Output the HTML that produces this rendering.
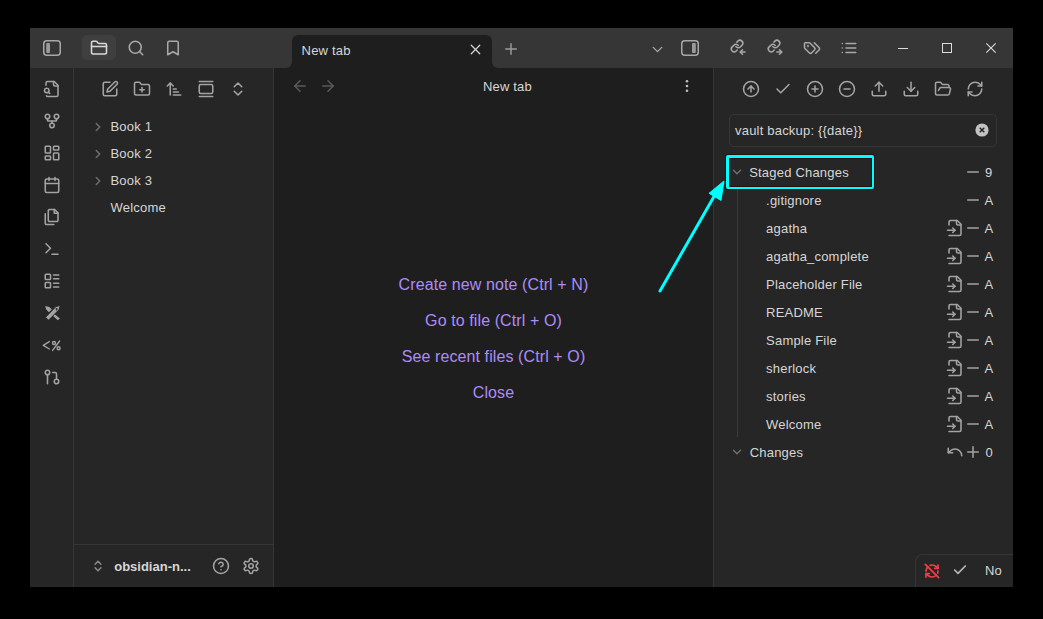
<!DOCTYPE html>
<html><head><meta charset="utf-8"><style>
html,body{margin:0;padding:0;}
body{width:1043px;height:619px;background:#000;position:relative;overflow:hidden;font-family:"Liberation Sans",sans-serif;}
.bg,.t,.ic{position:absolute;box-sizing:content-box;}
.t{white-space:nowrap;letter-spacing:0.2px;}
.ic{overflow:visible;}
</style></head><body>
<div class="bg" style="left:30px;top:28px;width:983px;height:40px;background:#363636"></div>
<div class="bg" style="left:30px;top:68px;width:43px;height:519px;background:#262626"></div>
<div class="bg" style="left:73px;top:68px;width:1px;height:519px;background:#363636"></div>
<div class="bg" style="left:74px;top:68px;width:199px;height:519px;background:#262626"></div>
<div class="bg" style="left:273px;top:68px;width:1px;height:519px;background:#363636"></div>
<div class="bg" style="left:274px;top:68px;width:439px;height:519px;background:#1e1e1e"></div>
<div class="bg" style="left:713px;top:68px;width:1px;height:519px;background:#363636"></div>
<div class="bg" style="left:714px;top:68px;width:299px;height:519px;background:#262626"></div>
<div class="bg" style="left:292px;top:35px;width:200px;height:34px;background:#1e1e1e;border-radius:6px 6px 0 0"></div>
<svg class="ic" style="left:286px;top:62px;width:6px;height:6px" viewBox="0 0 6 6"><path d="M0 6 A6 6 0 0 0 6 0 V6 Z" fill="#1e1e1e"/></svg>
<svg class="ic" style="left:492px;top:62px;width:6px;height:6px" viewBox="0 0 6 6"><path d="M6 6 A6 6 0 0 1 0 0 V6 Z" fill="#1e1e1e"/></svg>
<svg class="ic" style="left:42px;top:39px;width:20px;height:18px" viewBox="0 0 20 18"><rect x="1.75" y="1.75" width="16.5" height="14.5" rx="3" fill="none" stroke="#a8a8a8" stroke-width="1.5"/><rect x="4.2" y="4" width="3.8" height="10" rx="1" fill="#9a9a9a"/></svg>
<div class="bg" style="left:82px;top:35px;width:34px;height:25px;background:#3f3f3f;border-radius:5px"></div>
<svg class="ic" style="left:90.00px;top:38.50px;width:18px;height:18px" viewBox="0 0 24 24" fill="none" stroke="#dadada" stroke-width="2.067" stroke-linecap="round" stroke-linejoin="round"><path d="M20 20a2 2 0 0 0 2-2V8a2 2 0 0 0-2-2h-7.9a2 2 0 0 1-1.69-.9L9.6 3.9A2 2 0 0 0 7.93 3H4a2 2 0 0 0-2 2v13a2 2 0 0 0 2 2Z"/><path d="M2 10h20"/></svg>
<svg class="ic" style="left:126.80px;top:39.20px;width:18px;height:18px" viewBox="0 0 24 24" fill="none" stroke="#a8a8a8" stroke-width="2.067" stroke-linecap="round" stroke-linejoin="round"><circle cx="11" cy="11" r="8"/><path d="m21 21-4.3-4.3"/></svg>
<svg class="ic" style="left:163.90px;top:39.00px;width:18px;height:18px" viewBox="0 0 24 24" fill="none" stroke="#a8a8a8" stroke-width="2.067" stroke-linecap="round" stroke-linejoin="round"><path d="m19 21-7-4-7 4V5a2 2 0 0 1 2-2h10a2 2 0 0 1 2 2v16z"/></svg>
<div class="t" style="left:301.60px;top:44.00px;font-size:13px;line-height:13px;color:#d6d6d6;font-weight:normal;">New tab</div>
<svg class="ic" style="left:467.10px;top:41.10px;width:17px;height:17px" viewBox="0 0 24 24" fill="none" stroke="#d4d4d4" stroke-width="1.835" stroke-linecap="round" stroke-linejoin="round"><path d="M18 6 6 18"/><path d="m6 6 12 12"/></svg>
<svg class="ic" style="left:502.00px;top:40.10px;width:18px;height:18px" viewBox="0 0 24 24" fill="none" stroke="#9a9a9a" stroke-width="2.000" stroke-linecap="round" stroke-linejoin="round"><path d="M5 12h14"/><path d="M12 5v14"/></svg>
<svg class="ic" style="left:649.30px;top:40.70px;width:17px;height:17px" viewBox="0 0 24 24" fill="none" stroke="#a8a8a8" stroke-width="1.976" stroke-linecap="round" stroke-linejoin="round"><path d="m6 9 6 6 6-6"/></svg>
<svg class="ic" style="left:680px;top:39px;width:20px;height:18px" viewBox="0 0 20 18"><rect x="1.75" y="1.75" width="16.5" height="14.5" rx="3" fill="none" stroke="#a8a8a8" stroke-width="1.5"/><rect x="12" y="4" width="3.8" height="10" rx="1" fill="#9a9a9a"/></svg>
<svg class="ic" style="left:728.50px;top:38.20px;width:18px;height:18px" viewBox="0 0 24 24" fill="none" stroke="#a8a8a8" stroke-width="2.067" stroke-linecap="round" stroke-linejoin="round"><g transform="translate(10.75 10.75) scale(0.77) translate(-12 -12)" stroke-width="2.68"><path d="M10 13a5 5 0 0 0 7.54.54l3-3a5 5 0 0 0-7.07-7.07l-1.72 1.71"/><path d="M14 11a5 5 0 0 0-7.54-.54l-3 3a5 5 0 0 0 7.07 7.07l1.71-1.71"/></g><path d="M15.2 18.6h6.2"/><path d="M18 15.6l-3 3 3 3"/></svg>
<svg class="ic" style="left:766.00px;top:38.20px;width:18px;height:18px" viewBox="0 0 24 24" fill="none" stroke="#a8a8a8" stroke-width="2.067" stroke-linecap="round" stroke-linejoin="round"><g transform="translate(10.75 10.75) scale(0.77) translate(-12 -12)" stroke-width="2.68"><path d="M10 13a5 5 0 0 0 7.54.54l3-3a5 5 0 0 0-7.07-7.07l-1.72 1.71"/><path d="M14 11a5 5 0 0 0-7.54-.54l-3 3a5 5 0 0 0 7.07 7.07l1.71-1.71"/></g><path d="M14.5 18.6h6.2"/><path d="M18 15.6l3 3-3 3"/></svg>
<svg class="ic" style="left:802.80px;top:39.00px;width:18px;height:18px" viewBox="0 0 24 24" fill="none" stroke="#a8a8a8" stroke-width="2.067" stroke-linecap="round" stroke-linejoin="round"><path d="m15 5 6.3 6.3a2.4 2.4 0 0 1 0 3.4L17 19"/><path d="M9.586 5.586A2 2 0 0 0 8.172 5H3a1 1 0 0 0-1 1v5.172a2 2 0 0 0 .586 1.414L8.29 18.29a2.426 2.426 0 0 0 3.42 0l3.58-3.58a2.426 2.426 0 0 0 0-3.42z"/><circle cx="6.5" cy="9.5" r=".5" fill="currentColor"/></svg>
<svg class="ic" style="left:839.80px;top:38.75px;width:18px;height:18px" viewBox="0 0 24 24" fill="none" stroke="#a8a8a8" stroke-width="2.067" stroke-linecap="round" stroke-linejoin="round"><path d="M3 12h.01"/><path d="M3 18h.01"/><path d="M3 6h.01"/><path d="M8 12h13"/><path d="M8 18h13"/><path d="M8 6h13"/></svg>
<div class="bg" style="left:898px;top:48px;width:10px;height:1px;background:#dcdcdc"></div>
<div class="bg" style="left:942px;top:43px;width:8px;height:8px;border:1px solid #dcdcdc"></div>
<svg class="ic" style="left:986px;top:43px;width:10px;height:10px" viewBox="0 0 10 10"><path d="M0.3 0.3L9.7 9.7M9.7 0.3L0.3 9.7" stroke="#dcdcdc" stroke-width="1.1"/></svg>
<svg class="ic" style="left:43.00px;top:80.00px;width:18px;height:18px" viewBox="0 0 24 24" fill="none" stroke="#a3a3a3" stroke-width="2.067" stroke-linecap="round" stroke-linejoin="round"><path d="M4.6 21a1.6 1.6 0 0 0 1.6 1H18a2 2 0 0 0 2-2V7l-5-5H6a2 2 0 0 0-2 2v3"/><path d="M14 2v4a2 2 0 0 0 2 2h4"/><path d="M5 17a3 3 0 1 0 0-6 3 3 0 0 0 0 6z"/><path d="m9 18-1.5-1.5"/></svg>
<svg class="ic" style="left:43.00px;top:112.00px;width:18px;height:18px" viewBox="0 0 24 24" fill="none" stroke="#a3a3a3" stroke-width="2.067" stroke-linecap="round" stroke-linejoin="round"><circle cx="12" cy="18" r="3"/><circle cx="6" cy="6" r="3"/><circle cx="18" cy="6" r="3"/><path d="M18 9v2c0 .6-.4 1-1 1H7c-.6 0-1-.4-1-1V9"/><path d="M12 12v3"/></svg>
<svg class="ic" style="left:43.00px;top:144.00px;width:18px;height:18px" viewBox="0 0 24 24" fill="none" stroke="#a3a3a3" stroke-width="2.067" stroke-linecap="round" stroke-linejoin="round"><rect width="7" height="9" x="3" y="3" rx="1"/><rect width="7" height="5" x="14" y="3" rx="1"/><rect width="7" height="9" x="14" y="12" rx="1"/><rect width="7" height="5" x="3" y="16" rx="1"/></svg>
<svg class="ic" style="left:43.00px;top:176.00px;width:18px;height:18px" viewBox="0 0 24 24" fill="none" stroke="#a3a3a3" stroke-width="2.067" stroke-linecap="round" stroke-linejoin="round"><path d="M8 2v4"/><path d="M16 2v4"/><rect width="18" height="18" x="3" y="4" rx="2"/><path d="M3 10h18"/></svg>
<svg class="ic" style="left:43.00px;top:208.00px;width:18px;height:18px" viewBox="0 0 24 24" fill="none" stroke="#a3a3a3" stroke-width="2.067" stroke-linecap="round" stroke-linejoin="round"><path d="M15.5 2H8.6c-.4 0-.8.2-1.1.5-.3.3-.5.7-.5 1.1v12.8c0 .4.2.8.5 1.1.3.3.7.5 1.1.5h9.8c.4 0 .8-.2 1.1-.5.3-.3.5-.7.5-1.1V6.5L15.5 2z"/><path d="M3 7.6v12.8c0 .4.2.8.5 1.1.3.3.7.5 1.1.5h9.8"/><path d="M15 2v5h5"/></svg>
<svg class="ic" style="left:43.00px;top:240.00px;width:18px;height:18px" viewBox="0 0 24 24" fill="none" stroke="#a3a3a3" stroke-width="2.067" stroke-linecap="round" stroke-linejoin="round"><polyline points="4 17 10 11 4 5"/><line x1="12" x2="20" y1="19" y2="19"/></svg>
<svg class="ic" style="left:43.00px;top:272.00px;width:18px;height:18px" viewBox="0 0 24 24" fill="none" stroke="#a3a3a3" stroke-width="2.067" stroke-linecap="round" stroke-linejoin="round"><rect width="7" height="7" x="3" y="3" rx="1"/><rect width="7" height="7" x="3" y="14" rx="1"/><path d="M14 4h7"/><path d="M14 9h7"/><path d="M14 15h7"/><path d="M14 20h7"/></svg>
<svg class="ic" style="left:43.00px;top:368.00px;width:18px;height:18px" viewBox="0 0 24 24" fill="none" stroke="#a3a3a3" stroke-width="2.067" stroke-linecap="round" stroke-linejoin="round"><circle cx="18" cy="18" r="3"/><circle cx="6" cy="6" r="3"/><path d="M6 9v12"/><path d="M13 6h3a2 2 0 0 1 2 2v7"/></svg>
<svg class="ic" style="left:40px;top:300px;width:24px;height:24px" viewBox="0 0 24 24"><g fill="#a3a3a3"><path d="M5.2 5.9 L9.4 6.9 L11.8 9.6 L8.8 12.3 L6.2 9.6 Z"/><path d="M14.4 13.9 L19.9 18.4 L17.8 20.2 L12.6 15.6 Z"/><path fill-rule="evenodd" stroke="#262626" stroke-width="1" d="M5.4 17.4 L15.9 6.6 L20.3 5.3 L19.1 9.6 L8.6 20.2 Z M16.6 8.6 a0.6 0.6 0 1 0 0.01 0 Z"/></g></svg>
<svg class="ic" style="left:0;top:0;width:1043px;height:619px" viewBox="0 0 1043 619"><g fill="none" stroke="#a3a3a3" stroke-width="1.4" stroke-linecap="round" stroke-linejoin="round"><path d="M49.3 341.6 L43.3 345.3 L49.3 349"/><path d="M59.6 341 L52.6 350.4"/><circle cx="54" cy="343" r="1.5"/><circle cx="58.6" cy="348.3" r="1.5"/></g></svg>
<svg class="ic" style="left:101.00px;top:79.50px;width:18px;height:18px" viewBox="0 0 24 24" fill="none" stroke="#a3a3a3" stroke-width="2.067" stroke-linecap="round" stroke-linejoin="round"><path d="M12 3H5a2 2 0 0 0-2 2v14a2 2 0 0 0 2 2h14a2 2 0 0 0 2-2v-7"/><path d="M18.375 2.625a2.121 2.121 0 1 1 3 3L12 15l-4 1 1-4Z"/></svg>
<svg class="ic" style="left:133.00px;top:79.50px;width:18px;height:18px" viewBox="0 0 24 24" fill="none" stroke="#a3a3a3" stroke-width="2.067" stroke-linecap="round" stroke-linejoin="round"><path d="M12 10v6"/><path d="M9 13h6"/><path d="M20 20a2 2 0 0 0 2-2V8a2 2 0 0 0-2-2h-7.9a2 2 0 0 1-1.69-.9L9.6 3.9A2 2 0 0 0 7.93 3H4a2 2 0 0 0-2 2v13a2 2 0 0 0 2 2Z"/></svg>
<svg class="ic" style="left:165.00px;top:79.50px;width:18px;height:18px" viewBox="0 0 24 24" fill="none" stroke="#a3a3a3" stroke-width="2.067" stroke-linecap="round" stroke-linejoin="round"><path d="m3 8 4-4 4 4"/><path d="M7 4v16"/><path d="M11 12h4"/><path d="M11 16h7"/><path d="M11 20h10"/></svg>
<svg class="ic" style="left:197.00px;top:79.50px;width:18px;height:18px" viewBox="0 0 24 24" fill="none" stroke="#a3a3a3" stroke-width="2.067" stroke-linecap="round" stroke-linejoin="round"><path d="M3 2h18"/><rect width="18" height="12" x="3" y="6" rx="2"/><path d="M3 22h18"/></svg>
<svg class="ic" style="left:229.00px;top:79.50px;width:18px;height:18px" viewBox="0 0 24 24" fill="none" stroke="#a3a3a3" stroke-width="2.067" stroke-linecap="round" stroke-linejoin="round"><path d="m7 15 5 5 5-5"/><path d="m7 9 5-5 5 5"/></svg>
<svg class="ic" style="left:91.00px;top:119.50px;width:14px;height:14px" viewBox="0 0 24 24" fill="none" stroke="#6e6e6e" stroke-width="2.571" stroke-linecap="round" stroke-linejoin="round"><path d="m9 18 6-6-6-6"/></svg>
<div class="t" style="left:110.50px;top:120.00px;font-size:13px;line-height:13px;color:#d6d6d6;font-weight:normal;">Book 1</div>
<svg class="ic" style="left:91.00px;top:146.50px;width:14px;height:14px" viewBox="0 0 24 24" fill="none" stroke="#6e6e6e" stroke-width="2.571" stroke-linecap="round" stroke-linejoin="round"><path d="m9 18 6-6-6-6"/></svg>
<div class="t" style="left:110.50px;top:147.00px;font-size:13px;line-height:13px;color:#d6d6d6;font-weight:normal;">Book 2</div>
<svg class="ic" style="left:91.00px;top:173.50px;width:14px;height:14px" viewBox="0 0 24 24" fill="none" stroke="#6e6e6e" stroke-width="2.571" stroke-linecap="round" stroke-linejoin="round"><path d="m9 18 6-6-6-6"/></svg>
<div class="t" style="left:110.50px;top:174.00px;font-size:13px;line-height:13px;color:#d6d6d6;font-weight:normal;">Book 3</div>
<div class="t" style="left:110.50px;top:201.00px;font-size:13px;line-height:13px;color:#d6d6d6;font-weight:normal;">Welcome</div>
<div class="bg" style="left:74px;top:544px;width:199px;height:1px;background:#363636"></div>
<svg class="ic" style="left:91.00px;top:559.00px;width:14px;height:14px" viewBox="0 0 24 24" fill="none" stroke="#8a8a8a" stroke-width="2.571" stroke-linecap="round" stroke-linejoin="round"><path d="m7 15 5 5 5-5"/><path d="m7 9 5-5 5 5"/></svg>
<div class="t" style="left:114.20px;top:559.50px;font-size:13px;line-height:13px;color:#d6d6d6;font-weight:bold;letter-spacing:0">obsidian-n...</div>
<svg class="ic" style="left:211.80px;top:557.00px;width:18px;height:18px" viewBox="0 0 24 24" fill="none" stroke="#a3a3a3" stroke-width="2.067" stroke-linecap="round" stroke-linejoin="round"><circle cx="12" cy="12" r="10"/><path d="M9.09 9a3 3 0 0 1 5.83 1c0 2-3 3-3 3"/><path d="M12 17h.01"/></svg>
<svg class="ic" style="left:242.00px;top:557.00px;width:18px;height:18px" viewBox="0 0 24 24" fill="none" stroke="#a3a3a3" stroke-width="2.067" stroke-linecap="round" stroke-linejoin="round"><path d="M12.22 2h-.44a2 2 0 0 0-2 2v.18a2 2 0 0 1-1 1.73l-.43.25a2 2 0 0 1-2 0l-.15-.08a2 2 0 0 0-2.73.73l-.22.38a2 2 0 0 0 .73 2.73l.15.1a2 2 0 0 1 1 1.72v.51a2 2 0 0 1-1 1.74l-.15.09a2 2 0 0 0-.73 2.73l.22.38a2 2 0 0 0 2.73.73l.15-.08a2 2 0 0 1 2 0l.43.25a2 2 0 0 1 1 1.73V20a2 2 0 0 0 2 2h.44a2 2 0 0 0 2-2v-.18a2 2 0 0 1 1-1.73l.43-.25a2 2 0 0 1 2 0l.15.08a2 2 0 0 0 2.73-.73l.22-.39a2 2 0 0 0-.73-2.73l-.15-.08a2 2 0 0 1-1-1.74v-.5a2 2 0 0 1 1-1.74l.15-.09a2 2 0 0 0 .73-2.73l-.22-.38a2 2 0 0 0-2.73-.73l-.15.08a2 2 0 0 1-2 0l-.43-.25a2 2 0 0 1-1-1.73V4a2 2 0 0 0-2-2z"/><circle cx="12" cy="12" r="3"/></svg>
<svg class="ic" style="left:291.00px;top:77.00px;width:18px;height:18px" viewBox="0 0 24 24" fill="none" stroke="#5a5a5a" stroke-width="2.067" stroke-linecap="round" stroke-linejoin="round"><path d="m12 19-7-7 7-7"/><path d="M19 12H5"/></svg>
<svg class="ic" style="left:319.00px;top:77.00px;width:18px;height:18px" viewBox="0 0 24 24" fill="none" stroke="#5a5a5a" stroke-width="2.067" stroke-linecap="round" stroke-linejoin="round"><path d="M5 12h14"/><path d="m12 5 7 7-7 7"/></svg>
<div class="t" style="left:482.90px;top:79.80px;font-size:13px;line-height:13px;color:#d6d6d6;font-weight:normal;">New tab</div>
<svg class="ic" style="left:676px;top:76px;width:20px;height:20px" viewBox="676 76 20 20"><g fill="#bdbdbd"><circle cx="687" cy="81.2" r="1.3"/><circle cx="687" cy="86" r="1.3"/><circle cx="687" cy="90.8" r="1.3"/></g></svg>
<div class="t" style="left:274px;width:439px;text-align:center;top:274.80px;font-size:16px;line-height:20px;color:#ad8cf9;letter-spacing:0.1px">Create new note (Ctrl + N)</div>
<div class="t" style="left:274px;width:439px;text-align:center;top:310.80px;font-size:16px;line-height:20px;color:#ad8cf9;letter-spacing:0.1px">Go to file (Ctrl + O)</div>
<div class="t" style="left:274px;width:439px;text-align:center;top:346.80px;font-size:16px;line-height:20px;color:#ad8cf9;letter-spacing:0.1px">See recent files (Ctrl + O)</div>
<div class="t" style="left:274px;width:439px;text-align:center;top:382.80px;font-size:16px;line-height:20px;color:#ad8cf9;letter-spacing:0.1px">Close</div>
<svg class="ic" style="left:742.00px;top:80.00px;width:18px;height:18px" viewBox="0 0 24 24" fill="none" stroke="#a3a3a3" stroke-width="2.067" stroke-linecap="round" stroke-linejoin="round"><circle cx="12" cy="12" r="10"/><path d="m16 12-4-4-4 4"/><path d="M12 16V8"/></svg>
<svg class="ic" style="left:774.00px;top:80.00px;width:18px;height:18px" viewBox="0 0 24 24" fill="none" stroke="#a3a3a3" stroke-width="2.067" stroke-linecap="round" stroke-linejoin="round"><path d="M20 6 9 17l-5-5"/></svg>
<svg class="ic" style="left:806.00px;top:80.00px;width:18px;height:18px" viewBox="0 0 24 24" fill="none" stroke="#a3a3a3" stroke-width="2.067" stroke-linecap="round" stroke-linejoin="round"><circle cx="12" cy="12" r="10"/><path d="M8 12h8"/><path d="M12 8v8"/></svg>
<svg class="ic" style="left:838.00px;top:80.00px;width:18px;height:18px" viewBox="0 0 24 24" fill="none" stroke="#a3a3a3" stroke-width="2.067" stroke-linecap="round" stroke-linejoin="round"><circle cx="12" cy="12" r="10"/><path d="M8 12h8"/></svg>
<svg class="ic" style="left:870.00px;top:80.00px;width:18px;height:18px" viewBox="0 0 24 24" fill="none" stroke="#a3a3a3" stroke-width="2.067" stroke-linecap="round" stroke-linejoin="round"><path d="M21 15v4a2 2 0 0 1-2 2H5a2 2 0 0 1-2-2v-4"/><polyline points="17 8 12 3 7 8"/><line x1="12" x2="12" y1="3" y2="15"/></svg>
<svg class="ic" style="left:902.00px;top:80.00px;width:18px;height:18px" viewBox="0 0 24 24" fill="none" stroke="#a3a3a3" stroke-width="2.067" stroke-linecap="round" stroke-linejoin="round"><path d="M21 15v4a2 2 0 0 1-2 2H5a2 2 0 0 1-2-2v-4"/><polyline points="7 10 12 15 17 10"/><line x1="12" x2="12" y1="15" y2="3"/></svg>
<svg class="ic" style="left:934.00px;top:80.00px;width:18px;height:18px" viewBox="0 0 24 24" fill="none" stroke="#a3a3a3" stroke-width="2.067" stroke-linecap="round" stroke-linejoin="round"><path d="m6 14 1.5-2.9A2 2 0 0 1 9.24 10H20a2 2 0 0 1 1.94 2.5l-1.54 6a2 2 0 0 1-1.95 1.5H4a2 2 0 0 1-2-2V5a2 2 0 0 1 2-2h3.9a2 2 0 0 1 1.69.9l.81 1.2a2 2 0 0 0 1.67.9H18a2 2 0 0 1 2 2v2"/></svg>
<svg class="ic" style="left:966.00px;top:80.00px;width:18px;height:18px" viewBox="0 0 24 24" fill="none" stroke="#a3a3a3" stroke-width="2.067" stroke-linecap="round" stroke-linejoin="round"><path d="M3 12a9 9 0 0 1 9-9 9.75 9.75 0 0 1 6.74 2.74L21 8"/><path d="M21 3v5h-5"/><path d="M21 12a9 9 0 0 1-9 9 9.75 9.75 0 0 1-6.74-2.74L3 16"/><path d="M8 16H3v5"/></svg>
<div class="bg" style="left:729px;top:114px;width:266px;height:31px;border:1px solid #363636;border-radius:5px;background:#262626"></div>
<div class="t" style="left:735.00px;top:123.80px;font-size:13px;line-height:13px;color:#d6d6d6;font-weight:normal;">vault backup: {{date}}</div>
<svg class="ic" style="left:974.5px;top:123.4px;width:14px;height:14px" viewBox="0 0 14 14"><circle cx="7" cy="7" r="6.6" fill="#c2c2c2"/><path d="M4.7 4.7L9.3 9.3M9.3 4.7L4.7 9.3" stroke="#1e1e1e" stroke-width="1.3" stroke-linecap="butt"/></svg>
<svg class="ic" style="left:730.00px;top:165.00px;width:14px;height:14px" viewBox="0 0 24 24" fill="none" stroke="#6e6e6e" stroke-width="2.571" stroke-linecap="round" stroke-linejoin="round"><path d="m6 9 6 6 6-6"/></svg>
<div class="t" style="left:749.20px;top:165.90px;font-size:13px;line-height:13px;color:#d6d6d6;font-weight:normal;">Staged Changes</div>
<svg class="ic" style="left:964.00px;top:163.00px;width:18px;height:18px" viewBox="0 0 24 24" fill="none" stroke="#a3a3a3" stroke-width="2.067" stroke-linecap="round" stroke-linejoin="round"><path d="M5 12h14"/></svg>
<div class="t" style="left:984.90px;top:166.10px;font-size:13px;line-height:13px;color:#d6d6d6;font-weight:normal;">9</div>
<div class="bg" style="left:737px;top:189px;width:1px;height:248px;background:#3a3a3a"></div>
<div class="t" style="left:766.10px;top:193.80px;font-size:13px;line-height:13px;color:#d6d6d6;font-weight:normal;">.gitignore</div>
<svg class="ic" style="left:964.00px;top:191.00px;width:18px;height:18px" viewBox="0 0 24 24" fill="none" stroke="#a3a3a3" stroke-width="2.067" stroke-linecap="round" stroke-linejoin="round"><path d="M5 12h14"/></svg>
<div class="t" style="left:984.40px;top:193.80px;font-size:13px;line-height:13px;color:#d6d6d6;font-weight:normal;">A</div>
<div class="t" style="left:766.10px;top:221.80px;font-size:13px;line-height:13px;color:#d6d6d6;font-weight:normal;">agatha</div>
<svg class="ic" style="left:946.40px;top:219.10px;width:18px;height:18px" viewBox="0 0 24 24" fill="none" stroke="#a3a3a3" stroke-width="2.067" stroke-linecap="round" stroke-linejoin="round"><path d="M4 22h14a2 2 0 0 0 2-2V7l-5-5H6a2 2 0 0 0-2 2v4"/><path d="M14 2v4a2 2 0 0 0 2 2h4"/><path d="M2 15h10"/><path d="m9 18 3-3-3-3"/></svg>
<svg class="ic" style="left:964.00px;top:219.00px;width:18px;height:18px" viewBox="0 0 24 24" fill="none" stroke="#a3a3a3" stroke-width="2.067" stroke-linecap="round" stroke-linejoin="round"><path d="M5 12h14"/></svg>
<div class="t" style="left:984.40px;top:221.80px;font-size:13px;line-height:13px;color:#d6d6d6;font-weight:normal;">A</div>
<div class="t" style="left:766.10px;top:249.80px;font-size:13px;line-height:13px;color:#d6d6d6;font-weight:normal;">agatha_complete</div>
<svg class="ic" style="left:946.40px;top:247.10px;width:18px;height:18px" viewBox="0 0 24 24" fill="none" stroke="#a3a3a3" stroke-width="2.067" stroke-linecap="round" stroke-linejoin="round"><path d="M4 22h14a2 2 0 0 0 2-2V7l-5-5H6a2 2 0 0 0-2 2v4"/><path d="M14 2v4a2 2 0 0 0 2 2h4"/><path d="M2 15h10"/><path d="m9 18 3-3-3-3"/></svg>
<svg class="ic" style="left:964.00px;top:247.00px;width:18px;height:18px" viewBox="0 0 24 24" fill="none" stroke="#a3a3a3" stroke-width="2.067" stroke-linecap="round" stroke-linejoin="round"><path d="M5 12h14"/></svg>
<div class="t" style="left:984.40px;top:249.80px;font-size:13px;line-height:13px;color:#d6d6d6;font-weight:normal;">A</div>
<div class="t" style="left:766.10px;top:277.80px;font-size:13px;line-height:13px;color:#d6d6d6;font-weight:normal;">Placeholder File</div>
<svg class="ic" style="left:946.40px;top:275.10px;width:18px;height:18px" viewBox="0 0 24 24" fill="none" stroke="#a3a3a3" stroke-width="2.067" stroke-linecap="round" stroke-linejoin="round"><path d="M4 22h14a2 2 0 0 0 2-2V7l-5-5H6a2 2 0 0 0-2 2v4"/><path d="M14 2v4a2 2 0 0 0 2 2h4"/><path d="M2 15h10"/><path d="m9 18 3-3-3-3"/></svg>
<svg class="ic" style="left:964.00px;top:275.00px;width:18px;height:18px" viewBox="0 0 24 24" fill="none" stroke="#a3a3a3" stroke-width="2.067" stroke-linecap="round" stroke-linejoin="round"><path d="M5 12h14"/></svg>
<div class="t" style="left:984.40px;top:277.80px;font-size:13px;line-height:13px;color:#d6d6d6;font-weight:normal;">A</div>
<div class="t" style="left:766.10px;top:305.80px;font-size:13px;line-height:13px;color:#d6d6d6;font-weight:normal;">README</div>
<svg class="ic" style="left:946.40px;top:303.10px;width:18px;height:18px" viewBox="0 0 24 24" fill="none" stroke="#a3a3a3" stroke-width="2.067" stroke-linecap="round" stroke-linejoin="round"><path d="M4 22h14a2 2 0 0 0 2-2V7l-5-5H6a2 2 0 0 0-2 2v4"/><path d="M14 2v4a2 2 0 0 0 2 2h4"/><path d="M2 15h10"/><path d="m9 18 3-3-3-3"/></svg>
<svg class="ic" style="left:964.00px;top:303.00px;width:18px;height:18px" viewBox="0 0 24 24" fill="none" stroke="#a3a3a3" stroke-width="2.067" stroke-linecap="round" stroke-linejoin="round"><path d="M5 12h14"/></svg>
<div class="t" style="left:984.40px;top:305.80px;font-size:13px;line-height:13px;color:#d6d6d6;font-weight:normal;">A</div>
<div class="t" style="left:766.10px;top:333.80px;font-size:13px;line-height:13px;color:#d6d6d6;font-weight:normal;">Sample File</div>
<svg class="ic" style="left:946.40px;top:331.10px;width:18px;height:18px" viewBox="0 0 24 24" fill="none" stroke="#a3a3a3" stroke-width="2.067" stroke-linecap="round" stroke-linejoin="round"><path d="M4 22h14a2 2 0 0 0 2-2V7l-5-5H6a2 2 0 0 0-2 2v4"/><path d="M14 2v4a2 2 0 0 0 2 2h4"/><path d="M2 15h10"/><path d="m9 18 3-3-3-3"/></svg>
<svg class="ic" style="left:964.00px;top:331.00px;width:18px;height:18px" viewBox="0 0 24 24" fill="none" stroke="#a3a3a3" stroke-width="2.067" stroke-linecap="round" stroke-linejoin="round"><path d="M5 12h14"/></svg>
<div class="t" style="left:984.40px;top:333.80px;font-size:13px;line-height:13px;color:#d6d6d6;font-weight:normal;">A</div>
<div class="t" style="left:766.10px;top:361.80px;font-size:13px;line-height:13px;color:#d6d6d6;font-weight:normal;">sherlock</div>
<svg class="ic" style="left:946.40px;top:359.10px;width:18px;height:18px" viewBox="0 0 24 24" fill="none" stroke="#a3a3a3" stroke-width="2.067" stroke-linecap="round" stroke-linejoin="round"><path d="M4 22h14a2 2 0 0 0 2-2V7l-5-5H6a2 2 0 0 0-2 2v4"/><path d="M14 2v4a2 2 0 0 0 2 2h4"/><path d="M2 15h10"/><path d="m9 18 3-3-3-3"/></svg>
<svg class="ic" style="left:964.00px;top:359.00px;width:18px;height:18px" viewBox="0 0 24 24" fill="none" stroke="#a3a3a3" stroke-width="2.067" stroke-linecap="round" stroke-linejoin="round"><path d="M5 12h14"/></svg>
<div class="t" style="left:984.40px;top:361.80px;font-size:13px;line-height:13px;color:#d6d6d6;font-weight:normal;">A</div>
<div class="t" style="left:766.10px;top:389.80px;font-size:13px;line-height:13px;color:#d6d6d6;font-weight:normal;">stories</div>
<svg class="ic" style="left:946.40px;top:387.10px;width:18px;height:18px" viewBox="0 0 24 24" fill="none" stroke="#a3a3a3" stroke-width="2.067" stroke-linecap="round" stroke-linejoin="round"><path d="M4 22h14a2 2 0 0 0 2-2V7l-5-5H6a2 2 0 0 0-2 2v4"/><path d="M14 2v4a2 2 0 0 0 2 2h4"/><path d="M2 15h10"/><path d="m9 18 3-3-3-3"/></svg>
<svg class="ic" style="left:964.00px;top:387.00px;width:18px;height:18px" viewBox="0 0 24 24" fill="none" stroke="#a3a3a3" stroke-width="2.067" stroke-linecap="round" stroke-linejoin="round"><path d="M5 12h14"/></svg>
<div class="t" style="left:984.40px;top:389.80px;font-size:13px;line-height:13px;color:#d6d6d6;font-weight:normal;">A</div>
<div class="t" style="left:766.10px;top:417.80px;font-size:13px;line-height:13px;color:#d6d6d6;font-weight:normal;">Welcome</div>
<svg class="ic" style="left:946.40px;top:415.10px;width:18px;height:18px" viewBox="0 0 24 24" fill="none" stroke="#a3a3a3" stroke-width="2.067" stroke-linecap="round" stroke-linejoin="round"><path d="M4 22h14a2 2 0 0 0 2-2V7l-5-5H6a2 2 0 0 0-2 2v4"/><path d="M14 2v4a2 2 0 0 0 2 2h4"/><path d="M2 15h10"/><path d="m9 18 3-3-3-3"/></svg>
<svg class="ic" style="left:964.00px;top:415.00px;width:18px;height:18px" viewBox="0 0 24 24" fill="none" stroke="#a3a3a3" stroke-width="2.067" stroke-linecap="round" stroke-linejoin="round"><path d="M5 12h14"/></svg>
<div class="t" style="left:984.40px;top:417.80px;font-size:13px;line-height:13px;color:#d6d6d6;font-weight:normal;">A</div>
<svg class="ic" style="left:730.00px;top:445.00px;width:14px;height:14px" viewBox="0 0 24 24" fill="none" stroke="#6e6e6e" stroke-width="2.571" stroke-linecap="round" stroke-linejoin="round"><path d="m6 9 6 6 6-6"/></svg>
<div class="t" style="left:749.70px;top:445.80px;font-size:13px;line-height:13px;color:#d6d6d6;font-weight:normal;">Changes</div>
<svg class="ic" style="left:945.80px;top:443.00px;width:18px;height:18px" viewBox="0 0 24 24" fill="none" stroke="#a3a3a3" stroke-width="2.067" stroke-linecap="round" stroke-linejoin="round"><path d="M3 7v6h6"/><path d="M21 17a9 9 0 0 0-9-9 9 9 0 0 0-6 2.3L3 13"/></svg>
<svg class="ic" style="left:964.00px;top:443.00px;width:18px;height:18px" viewBox="0 0 24 24" fill="none" stroke="#a3a3a3" stroke-width="2.067" stroke-linecap="round" stroke-linejoin="round"><path d="M5 12h14"/><path d="M12 5v14"/></svg>
<div class="t" style="left:985.40px;top:445.80px;font-size:13px;line-height:13px;color:#d6d6d6;font-weight:normal;">0</div>
<div class="bg" style="left:726px;top:155px;width:143px;height:29px;border:solid #00ffff;border-width:3px 2px 2px 3px;border-radius:2px;box-shadow:0 0 0 1px rgba(30,8,8,0.6), inset 0 0 0 1px rgba(30,8,8,0.6)"></div>
<svg class="ic" style="left:0;top:0;width:1043px;height:619px" viewBox="0 0 1043 619"><line x1="660" y1="291" x2="716" y2="193" stroke="#00ffff" stroke-width="3" stroke-linecap="round"/><path d="M724 181 L709 193.3 L721 200.4 Z" fill="#00ffff" stroke="#00ffff" stroke-width="1" stroke-linejoin="round"/></svg>
<div class="bg" style="left:915px;top:554px;width:97px;height:32px;border-top:1px solid #363636;border-left:1px solid #363636;border-radius:8px 0 0 0;background:#262626"></div>
<svg class="ic" style="left:924.00px;top:563.00px;width:16px;height:16px" viewBox="0 0 24 24" fill="none" stroke="#ec4048" stroke-width="2.625" stroke-linecap="round" stroke-linejoin="round"><path d="M21 8L18.74 5.74A9.75 9.75 0 0 0 12 3C11 3 10.03 3.16 9.13 3.47"/><path d="M8 16H3v5"/><path d="M3 12C3 9.51 4 7.26 5.64 5.64"/><path d="m3 16 2.26 2.26A9.75 9.75 0 0 0 12 21c2.49 0 4.74-1 6.36-2.64"/><path d="M21 12c0 1-.16 1.97-.47 2.87"/><path d="M21 3v5h-5"/><path d="M22 22 2 2"/></svg>
<svg class="ic" style="left:952.00px;top:562.00px;width:16px;height:16px" viewBox="0 0 24 24" fill="none" stroke="#b3b3b3" stroke-width="2.625" stroke-linecap="round" stroke-linejoin="round"><path d="M20 6 9 17l-5-5"/></svg>
<div class="t" style="left:985.00px;top:564.00px;font-size:13px;line-height:13px;color:#d6d6d6;font-weight:normal;">No</div>
</body></html>
